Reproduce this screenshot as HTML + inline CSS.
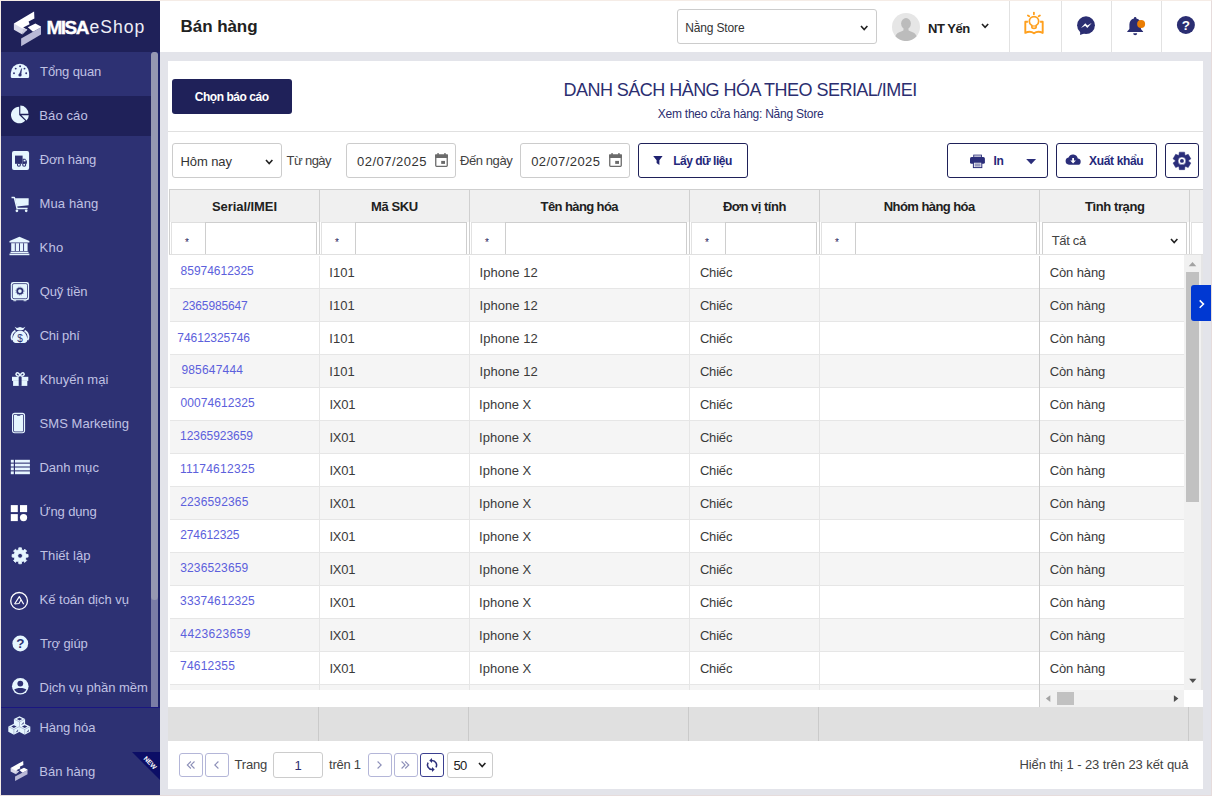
<!DOCTYPE html>
<html lang="vi"><head><meta charset="utf-8"><title>MISA eShop - Bán hàng</title>
<style>
*{box-sizing:border-box;margin:0;padding:0}
html,body{width:1212px;height:796px;overflow:hidden}
body{position:relative;background:#e3e4ea;font-family:"Liberation Sans",sans-serif;font-size:13px;color:#333}
svg{display:block;position:absolute}
.t{position:absolute;white-space:nowrap;line-height:16px;display:block}
a{text-decoration:none}
#frame{position:absolute;left:0;top:0;width:1212px;height:796px;border:1px solid #e6dcdc;border-left-color:#f5ece6;border-top-color:#f5ece6;pointer-events:none}
#side{position:absolute;left:0;top:0;width:160px;height:796px;background:#2d3173;overflow:hidden}
#logo{position:absolute;left:0;top:0;width:160px;height:52px;background:#1f2159}
.misa{font-weight:bold;font-size:19px;color:#fff;line-height:24px;-webkit-text-stroke:0.35px #fff}
.eshop{font-size:17.6px;color:#eeeef6;line-height:24px}
#menu{position:absolute;left:0;top:0;width:160px;height:707px;overflow:hidden}
.mi{position:absolute;left:0;width:160px;height:40px}
.mi.act{background:#1f2159;width:151px}
.mi .ic{position:absolute;left:0;top:0;width:40px;height:40px}
.tx{font-size:13px;color:#c0c2e3}
#sbtrack{position:absolute;left:151px;top:52px;width:7px;height:655px;background:#7b7da6;border-radius:4px 4px 0 0}
#sbthumb{position:absolute;left:151px;top:52px;width:7px;height:548px;background:#9698b2;border-radius:4px}
#side:after{content:"";position:absolute;left:158px;top:52px;width:2px;height:655px;background:#1f2468}
#sidebot{position:absolute;left:0;top:707px;width:160px;height:89px;border-top:1px solid #1a1680;background:#2d3173}
#newtri{position:absolute;right:0;top:44px;width:0;height:0;border-top:28px solid #0c0e66;border-left:28px solid transparent}
#newtx{position:absolute;left:141px;top:50.6px;width:18px;text-align:center;font-size:6.6px;font-weight:bold;color:#fff;transform:rotate(45deg);transform-origin:center;line-height:8px}
#top{position:absolute;left:160px;top:0;width:1052px;height:52px;background:#fff}
.ttl{font-size:17px;font-weight:bold;color:#212121;line-height:24px}
#store{position:absolute;left:677px;top:9px;width:200px;height:35px;border:1px solid #ccc;border-radius:3px;background:#fff}
.st{font-size:12px;color:#333}
#avatar{position:absolute;left:892px;top:13px;width:28px;height:28px}
.uname{font-size:13px;font-weight:bold;color:#212121}
#uchev{position:absolute;left:980px;top:22px;width:12px;height:8px}
.vsep{position:absolute;top:0;width:1px;height:52px;background:#e2e2e2}
#card{position:absolute;left:168px;top:61px;width:1035px;height:728px;background:#fff}
#btnrep{position:absolute;left:172px;top:79px;width:120px;height:35px;background:#1f2159;border-radius:3px}
.bt{color:#fff;font-weight:bold;font-size:12px;width:120px;text-align:center;line-height:35px}
.h1{font-size:18px;line-height:24px;color:#2b2e70}
.h2{font-size:12px;color:#2b2e70}
#hr{position:absolute;left:168px;top:131px;width:1035px;height:1px;background:#e0e0e0}
.inp{position:absolute;top:143px;height:35px;border:1px solid #ccc;border-radius:3px;background:#fff}
.v{font-size:13px;color:#333}
.lbl{font-size:13px;color:#424242}
.btn{position:absolute;top:143px;height:35px;border:1px solid #1f2159;border-radius:3px;background:#fff}
.b{font-size:12px;font-weight:bold;color:#25287a}
#thead{position:absolute;left:169px;top:189px;width:1034px;height:66px;background:#fff;border-top:1px solid #cfcfcf;border-left:1px solid #cfcfcf;border-bottom:1px solid #e0e0e0;overflow:hidden}
#thead:before{content:"";position:absolute;left:0;top:0;width:1033px;height:32px;background:#f0f0f0}
.th{font-weight:bold;font-size:13px;color:#212121}
.thsep{position:absolute;top:0;width:1px;height:65px;background:#d0d0d0}
.fop{position:absolute;top:32px;width:34px;height:33px;background:#fff;border-top:1px solid #dedede;border-left:1px solid #e2e2e2;font-size:10px;text-align:center;line-height:40px;color:#1f2159;padding-right:3px}
.fin{position:absolute;top:32px;height:33px;background:#fff;border:1px solid #cecece;border-bottom:none}
.fsel{position:absolute;top:32px;height:33px;background:#fff;border:1px solid #d0d0d0;border-bottom:none}
.fs{font-size:13px;color:#424242}
#tbody{position:absolute;left:170px;top:255px;width:1014px;height:435px;overflow:hidden}
.tr{position:absolute;left:0;width:1014px;height:33px;background:#fff}
.tr{border-top:1px solid #e6e6e6}
.tr:first-child{border-top-color:#fff}
.tr.alt{background:#f5f5f5}
.td{font-size:13px;color:#3a3a3a}
.sn{font-size:12px;color:#5c60dc}
.colsep{position:absolute;top:1px;width:1px;height:452px;background:#e6e6e6}
.colsep.dk{background:#cbcbcb}
#vsb{position:absolute;left:1184px;top:255px;width:19px;border-right:2px solid #e5e5e6;height:435px;background:#f1f1f1}
#vsb .thumb{position:absolute;left:2px;top:17px;width:13px;height:230px;background:#c1c1c1}
#hsb{position:absolute;left:1039px;top:690px;width:145px;height:17px;background:#f1f1f1;border-left:1px solid #cbcbcb}
#hsb .thumb{position:absolute;left:17px;top:2px;width:17px;height:13px;background:#c1c1c1}
#sum{position:absolute;left:168px;top:707px;width:1035px;height:34px;background:#e0e0e0}
.ssep{position:absolute;top:0;width:1px;height:34px;background:#cacaca}
.pb{position:absolute;top:753px;width:24px;height:24px;border:1px solid #b4b6d8;border-radius:3px;background:#fff}
.pb.dark{border-color:#3b3f90}
.ptx{font-size:13px;color:#424242}
.pin{position:absolute;left:273px;top:752px;width:50px;height:26px;border:1px solid #ccc;border-radius:3px}
.pv{font-size:13px;color:#212121}
.pin .pv{width:48px;text-align:center;line-height:24px;color:#2b2e70}
.psel{position:absolute;left:447px;top:752px;width:46px;height:26px;border:1px solid #ccc;border-radius:3px}
#tab{position:absolute;left:1191px;top:285px;width:20px;height:36px;background:#0038d2;border-radius:3px 0 0 3px}
</style></head><body>
<div id="side">
<div id="logo"><svg width="160" height="52" viewBox="0 0 160 52" style="left:0;top:0"><polygon points="13.9,23.6 34.1,11.4 34.4,18.4 28.6,21.6 29.6,24.2 23.2,27.6 27.4,29.8 22.4,32.8" fill="#fff"/><polygon points="13.9,23.6 22.4,28.6 22.4,34.6 13.9,29.8" fill="#d9d9ea"/><polygon points="22.4,28.2 27.4,29.8 22.4,34.6" fill="#c9c9e0"/><polygon points="27.8,27.2 35.4,23.4 41,26.4 41,27.4 33,31.8" fill="#fff"/><polygon points="21.1,38.6 41,27.2 41,34.4 21.1,46.2" fill="#b9b9d6"/></svg><span id="misa" class="t misa" style="left:46.5px;top:15.8px;letter-spacing:-1.5px;">MISA</span><span id="eshop" class="t eshop" style="left:89.4px;top:15.4px;letter-spacing:1.0px;">eShop</span></div>
<div id="menu">
<div class="mi" style="top:52px"><span class="ic"><svg width="40" height="40" viewBox="0 0 40 40" style="left:0;top:0"><path d="M10.8,21 A9.15,9.15 0 0 1 29.1,21 L29.1,24.8 Q29.1,26.1 27.8,26.1 L12.1,26.1 Q10.8,26.1 10.8,24.8 Z" fill="#e6f6ff"/><circle cx="14" cy="21.2" r="0.95" fill="#2d3173"/><circle cx="15.7" cy="16.6" r="0.95" fill="#2d3173"/><circle cx="20.1" cy="14.2" r="0.95" fill="#2d3173"/><circle cx="24.5" cy="16.6" r="0.95" fill="#2d3173"/><circle cx="26.2" cy="21.2" r="0.95" fill="#2d3173"/><circle cx="20" cy="23" r="1.6" fill="#2d3173"/><path d="M19.3,22.8 L21.6,16.6 L20.9,23.2 Z" fill="#2d3173" stroke="#2d3173" stroke-width="0.6"/></svg></span><span id="m0" class="t tx" style="left:40.08px;top:12px;letter-spacing:-0.125px;">Tổng quan</span></div>
<div class="mi act" style="top:96px"><span class="ic"><svg width="40" height="40" viewBox="0 0 40 40" style="left:0;top:0"><path d="M19.2,18.9 L19.2,10.7 A8.3,8.3 0 1 0 25.2,24.8 Z" fill="#e6f6ff"/><path d="M20.3,17.7 L20.3,9.6 A8.1,8.1 0 0 1 28.4,17.7 Z" fill="#e6f6ff"/><path d="M21.4,19.2 L28.8,19.2 A8.4,8.4 0 0 1 26.6,24.6 Z" fill="#e6f6ff"/></svg></span><span id="m1" class="t tx" style="left:39.25px;top:12px;letter-spacing:0.125px;">Báo cáo</span></div>
<div class="mi" style="top:140px"><span class="ic"><svg width="40" height="40" viewBox="0 0 40 40" style="left:0;top:0"><rect x="12" y="10.9" width="17.1" height="19.1" rx="2" fill="#e6f6ff"/><rect x="15" y="15.6" width="7.6" height="8.2" fill="#2d3173"/><path d="M22.6,18.8 L25.2,18.8 L26.9,21 L26.9,23.8 L22.6,23.8 Z" fill="#2d3173"/><rect x="23.6" y="19.8" width="1.9" height="1.6" fill="#e6f6ff"/><circle cx="18.9" cy="24.8" r="1.5" fill="#e6f6ff" stroke="#2d3173" stroke-width="1.1"/><circle cx="24.2" cy="24.8" r="1.5" fill="#e6f6ff" stroke="#2d3173" stroke-width="1.1"/></svg></span><span id="m2" class="t tx" style="left:39.8px;top:12px;letter-spacing:-0.178px;">Đơn hàng</span></div>
<div class="mi" style="top:184px"><span class="ic"><svg width="40" height="40" viewBox="0 0 40 40" style="left:0;top:0"><path d="M11.5,13.4 L14.3,13.4 L17.1,24.6 L27.6,24.6" fill="none" stroke="#e6f6ff" stroke-width="1.5" stroke-linejoin="round"/><polygon points="15,14.2 28.7,14.2 28.6,21.2 16.9,22.4" fill="#e6f6ff"/><circle cx="16.9" cy="26.8" r="1.35" fill="#e6f6ff"/><circle cx="26.2" cy="26.8" r="1.35" fill="#e6f6ff"/></svg></span><span id="m3" class="t tx" style="left:39.5px;top:12px;letter-spacing:0.143px;">Mua hàng</span></div>
<div class="mi" style="top:228px"><span class="ic"><svg width="40" height="40" viewBox="0 0 40 40" style="left:0;top:0"><polygon points="19.4,8.7 29.4,13 29.4,14.4 9.5,14.4 9.5,13" fill="#e6f6ff"/><rect x="11.2" y="15.2" width="16.4" height="8" fill="#e6f6ff"/><rect x="14.850000000000001" y="15.2" width="0.9" height="8" fill="#2d3173"/><rect x="19.05" y="15.2" width="0.9" height="8" fill="#2d3173"/><rect x="23.150000000000002" y="15.2" width="0.9" height="8" fill="#2d3173"/><rect x="10.5" y="23.8" width="18" height="1.3" fill="#e6f6ff"/><rect x="9.5" y="25.6" width="19.9" height="1.6" fill="#e6f6ff"/></svg></span><span id="m4" class="t tx" style="left:39.6px;top:12px;letter-spacing:0.25px;">Kho</span></div>
<div class="mi" style="top:272px"><span class="ic"><svg width="40" height="40" viewBox="0 0 40 40" style="left:0;top:0"><rect x="10.8" y="10" width="18.3" height="18.3" rx="2.4" fill="#e6f6ff"/><rect x="12.4" y="11.6" width="15.1" height="15.1" rx="1.6" fill="none" stroke="#2d3173" stroke-width="0.8"/><circle cx="19.9" cy="19.1" r="2.7" fill="#e6f6ff" stroke="#2d3173" stroke-width="1.7"/><circle cx="19.9" cy="19.1" r="4.1" fill="none" stroke="#2d3173" stroke-width="0.9" stroke-dasharray="1 1.15" opacity=".55"/><rect x="13.4" y="28.3" width="2.8" height="0.9" fill="#e6f6ff"/><rect x="23.6" y="28.3" width="2.8" height="0.9" fill="#e6f6ff"/></svg></span><span id="m5" class="t tx" style="left:39.65px;top:12px;letter-spacing:-0.071px;">Quỹ tiền</span></div>
<div class="mi" style="top:316px"><span class="ic"><svg width="40" height="40" viewBox="0 0 40 40" style="left:0;top:0"><path d="M20,14.6 C25.6,14.8 27.6,21 27.2,24.4 C27,26.6 25,27.1 20,27.1 C15,27.1 13,26.6 12.8,24.4 C12.4,21 14.4,14.8 20,14.6 Z" fill="#e6f6ff"/><path d="M14.6,10.8 L17,11.9 L20,10.9 L23,11.9 L25.4,10.8 L23.2,13.9 L16.8,13.9 Z" fill="#e6f6ff"/><path d="M15.4,14.6 C12.6,16.2 11.2,19.4 11.7,22.4 L12.6,24" fill="none" stroke="#e6f6ff" stroke-width="1.8"/><path d="M24.6,14.6 C27.4,16.2 28.8,19.4 28.3,22.4 L27.4,24" fill="none" stroke="#e6f6ff" stroke-width="1.8"/><text x="20" y="25.6" font-size="10" text-anchor="middle" fill="#2d3173" font-family="Liberation Sans, sans-serif">$</text></svg></span><span id="m6" class="t tx" style="left:39.65px;top:12px;letter-spacing:-0.167px;">Chi phí</span></div>
<div class="mi" style="top:360px"><span class="ic"><svg width="40" height="40" viewBox="0 0 40 40" style="left:0;top:0"><ellipse cx="17.8" cy="14.5" rx="1.9" ry="1.5" transform="rotate(35 17.8 14.5)" fill="none" stroke="#e6f6ff" stroke-width="1.5"/><ellipse cx="22.4" cy="14.5" rx="1.9" ry="1.5" transform="rotate(-35 22.4 14.5)" fill="none" stroke="#e6f6ff" stroke-width="1.5"/><rect x="12" y="16.8" width="16.3" height="4.1" fill="#e6f6ff"/><rect x="13.1" y="20.9" width="14.2" height="5" fill="#e6f6ff"/><rect x="18.7" y="16.8" width="2.9" height="9.1" fill="#2d3173"/></svg></span><span id="m7" class="t tx" style="left:39.67px;top:12px;letter-spacing:0.001px;">Khuyến mại</span></div>
<div class="mi" style="top:404px"><span class="ic"><svg width="40" height="40" viewBox="0 0 40 40" style="left:0;top:0"><rect x="12.55" y="9.35" width="12" height="19.4" rx="2.2" fill="#2d3173" stroke="#e6f6ff" stroke-width="1.1"/><rect x="13.9" y="10.7" width="9.3" height="16.7" rx="1" fill="#e6f6ff"/><path d="M16.6,10.7 L20.6,10.7 Q20.4,11.7 19.4,11.7 L17.8,11.7 Q16.8,11.7 16.6,10.7 Z" fill="#2d3173"/></svg></span><span id="m8" class="t tx" style="left:39.62px;top:12px;letter-spacing:0.042px;">SMS Marketing</span></div>
<div class="mi" style="top:448px"><span class="ic"><svg width="40" height="40" viewBox="0 0 40 40" style="left:0;top:0"><rect x="10.8" y="11.8" width="3" height="2.8" fill="#e6f6ff"/><rect x="15" y="11.8" width="14.9" height="2.8" fill="#e6f6ff"/><rect x="10.8" y="15.67" width="3" height="2.8" fill="#e6f6ff"/><rect x="15" y="15.67" width="14.9" height="2.8" fill="#e6f6ff"/><rect x="10.8" y="19.53" width="3" height="2.8" fill="#e6f6ff"/><rect x="15" y="19.53" width="14.9" height="2.8" fill="#e6f6ff"/><rect x="10.8" y="23.4" width="3" height="2.8" fill="#e6f6ff"/><rect x="15" y="23.4" width="14.9" height="2.8" fill="#e6f6ff"/></svg></span><span id="m9" class="t tx" style="left:39.4px;top:12px;letter-spacing:0.035px;">Danh mục</span></div>
<div class="mi" style="top:492px"><span class="ic"><svg width="40" height="40" viewBox="0 0 40 40" style="left:0;top:0"><rect x="10.8" y="13.1" width="7" height="7" fill="#fff"/><rect x="20" y="13.1" width="7.1" height="7" fill="#fff"/><rect x="10.8" y="22.1" width="7" height="7" fill="#fff"/><circle cx="23.55" cy="25.6" r="3.6" fill="#fff"/></svg></span><span id="m10" class="t tx" style="left:39.58px;top:12px;letter-spacing:-0.143px;">Ứng dụng</span></div>
<div class="mi" style="top:536px"><span class="ic"><svg width="40" height="40" viewBox="0 0 40 40" style="left:0;top:0"><path d="M18.66,13.77 L18.78,11.81 L21.42,11.81 L21.54,13.77 L23.34,14.52 L24.82,13.22 L26.68,15.08 L25.38,16.56 L26.13,18.36 L28.09,18.48 L28.09,21.12 L26.13,21.24 L25.38,23.04 L26.68,24.52 L24.82,26.38 L23.34,25.08 L21.54,25.83 L21.42,27.79 L18.78,27.79 L18.66,25.83 L16.86,25.08 L15.38,26.38 L13.52,24.52 L14.82,23.04 L14.07,21.24 L12.11,21.12 L12.11,18.48 L14.07,18.36 L14.82,16.56 L13.52,15.08 L15.38,13.22 L16.86,14.52 Z M17.700000000000003,19.8 a2.4,2.4 0 1 0 4.8,0 a2.4,2.4 0 1 0 -4.8,0 Z" fill="#e6f6ff" fill-rule="evenodd" stroke="#e6f6ff" stroke-width="0.8" stroke-linejoin="round"/></svg></span><span id="m11" class="t tx" style="left:40.08px;top:12px;letter-spacing:0.064px;">Thiết lập</span></div>
<div class="mi" style="top:580px"><span class="ic"><svg width="40" height="40" viewBox="0 0 40 40" style="left:0;top:0"><circle cx="19.1" cy="20.9" r="8.4" fill="none" stroke="#fff" stroke-width="1.3"/><path d="M14.6,24 L19.3,16.6 L23.7,24.2" fill="none" stroke="#fff" stroke-width="1.2" stroke-linejoin="round"/><path d="M14.6,24 L19,23.5 L20.9,20" fill="none" stroke="#fff" stroke-width="1.1" stroke-linejoin="round"/></svg></span><span id="m12" class="t tx" style="left:39.6px;top:12px;letter-spacing:-0.018px;">Kế toán dịch vụ</span></div>
<div class="mi" style="top:624px"><span class="ic"><svg width="40" height="40" viewBox="0 0 40 40" style="left:0;top:0"><circle cx="20.3" cy="19.5" r="7.9" fill="#e6f6ff"/><text x="20.3" y="24.2" font-size="13.5" font-weight="bold" text-anchor="middle" fill="#2d3173" font-family="Liberation Sans, sans-serif">?</text></svg></span><span id="m13" class="t tx" style="left:40.0px;top:12px;letter-spacing:-0.107px;">Trợ giúp</span></div>
<div class="mi" style="top:668px"><span class="ic"><svg width="40" height="40" viewBox="0 0 40 40" style="left:0;top:0"><circle cx="20.3" cy="18.3" r="8.3" fill="#e6f6ff"/><circle cx="20.3" cy="15.6" r="2.9" fill="#2d3173"/><path d="M14.2,21.6 C16,19.4 24.6,19.4 26.4,21.6 A6.9,6.9 0 0 1 14.2,21.6 Z" fill="#2d3173"/></svg></span><span id="m14" class="t tx" style="left:39.5px;top:12px;letter-spacing:0.001px;">Dịch vụ phần mềm</span></div>
<div id="sbtrack"></div><div id="sbthumb"></div>
</div>
<div id="sidebot">
<div class="mi" style="top:0px"><span class="ic"><svg width="40" height="40" viewBox="0 0 40 40" style="left:0;top:0"><polygon points="19.5,8.2 25.1,11.049999999999999 25.1,16.349999999999998 19.5,19.2 13.9,16.349999999999998 13.9,11.049999999999999" fill="#e6f6ff"/><path d="M13.9,11.049999999999999 L19.5,13.899999999999999 L25.1,11.049999999999999 M19.5,13.899999999999999 L19.5,19.2" stroke="#2d3173" stroke-width="0.6" fill="none" opacity=".45"/><polygon points="19.5,9.7 22.2,11.049999999999999 19.5,12.399999999999999 16.8,11.049999999999999" fill="#2d3173"/><polygon points="21.1,17.0 23.7,13.749999999999998 23.7,15.949999999999998" fill="#2d3173" opacity=".8"/><polygon points="13.9,15.7 19.5,18.55 19.5,23.85 13.9,26.7 8.3,23.85 8.3,18.55" fill="#e6f6ff"/><path d="M8.3,18.55 L13.9,21.4 L19.5,18.55 M13.9,21.4 L13.9,26.7" stroke="#2d3173" stroke-width="0.6" fill="none" opacity=".45"/><polygon points="13.9,17.2 16.6,18.55 13.9,19.9 11.2,18.55" fill="#2d3173"/><polygon points="15.5,24.5 18.1,21.25 18.1,23.450000000000003" fill="#2d3173" opacity=".8"/><polygon points="24.7,15.7 30.299999999999997,18.55 30.299999999999997,23.85 24.7,26.7 19.1,23.85 19.1,18.55" fill="#e6f6ff"/><path d="M19.1,18.55 L24.7,21.4 L30.299999999999997,18.55 M24.7,21.4 L24.7,26.7" stroke="#2d3173" stroke-width="0.6" fill="none" opacity=".45"/><polygon points="24.7,17.2 27.4,18.55 24.7,19.9 22.0,18.55" fill="#2d3173"/><polygon points="26.3,24.5 28.9,21.25 28.9,23.450000000000003" fill="#2d3173" opacity=".8"/></svg></span><span id="m15" class="t tx" style="left:39.48px;top:12px;letter-spacing:-0.07px;">Hàng hóa</span></div>
<div class="mi" style="top:44px"><span class="ic"><svg width="40" height="40" viewBox="0 0 40 40" style="left:0;top:0"><g transform="translate(10.6,8.9) scale(0.6236,0.578) translate(-13.9,-11.4)"><polygon points="13.9,23.6 34.1,11.4 34.4,18.4 28.6,21.6 29.6,24.2 23.2,27.6 27.4,29.8 22.4,32.8" fill="#fff"/><polygon points="13.9,23.6 22.4,28.6 22.4,34.6 13.9,29.8" fill="#d9d9ea"/><polygon points="22.4,28.2 27.4,29.8 22.4,34.6" fill="#c9c9e0"/><polygon points="27.8,27.2 35.4,23.4 41,26.4 41,27.4 33,31.8" fill="#fff"/><polygon points="21.1,38.6 41,27.2 41,34.4 21.1,46.2" fill="#b9b9d6"/></g></svg></span><span id="m16" class="t tx" style="left:39.3px;top:12px;letter-spacing:0.035px;">Bán hàng</span></div>
<div id="newtri"></div><div id="newtx">NEW</div>
</div>
</div>
<div id="top"></div>
<div id="ttl" class="t ttl" style="left:180.62px;top:15px;letter-spacing:-0.072px;">Bán hàng</div>
<div id="store"><span id="store_t" class="t st" style="left:7.35px;top:10px;letter-spacing:-0.166px;">Nằng Store</span><svg width="10.4" height="7.5" viewBox="-2 -2 10.4 7.5" style="left:181.00px;top:14.25px"><path d="M0,0 L3.2,3.5 L6.4,0" fill="none" stroke="#212121" stroke-width="1.6"/></svg></div>
<div id="avatar"><svg width="28" height="28" viewBox="0 0 28 28" style="left:0;top:0"><circle cx="14" cy="14" r="14" fill="#e6e6e6"/><ellipse cx="14" cy="10.6" rx="4.9" ry="5.6" fill="#bcbcbc"/><path d="M3.4,23.2 C4.6,19.6 8.6,19 11.4,17.6 L11.6,15 L16.4,15 L16.6,17.6 C19.4,19 23.4,19.6 24.6,23.2 A14,14 0 0 1 3.4,23.2 Z" fill="#bcbcbc"/></svg></div><div id="uname" class="t uname" style="left:927.97px;top:21px;letter-spacing:-0.48px;">NT Yến</div><div id="uchev"><svg width="10.2" height="7.3" viewBox="-2 -2 10.2 7.3" style="left:0.40px;top:0.25px"><path d="M0,0 L3.1,3.3 L6.2,0" fill="none" stroke="#212121" stroke-width="1.6"/></svg></div>
<div class="vsep" style="left:1009px"></div><div class="vsep" style="left:1061px"></div><div class="vsep" style="left:1111px"></div><div class="vsep" style="left:1161px"></div>
<svg width="1212" height="52" viewBox="0 0 1212 52" style="left:0;top:0;pointer-events:none"><g fill="none" stroke="#ffa01e" stroke-width="1.9" stroke-linejoin="round"><path d="M1027.9,21.7 L1025.3,21.7 L1025.3,32.9 C1028.5,31.2 1031.5,31.4 1034,33.2 C1036.5,31.4 1039.5,31.2 1042.7,32.9 L1042.7,21.7 L1040.1,21.7"/><path d="M1031.9,25.6 C1029.6,24.2 1029.3,22.6 1029.3,21.4 A4.7,4.7 0 0 1 1038.7,21.4 C1038.7,22.6 1038.4,24.2 1036.1,25.6 L1036.1,27.3 Q1036.1,28.4 1034,28.4 Q1031.9,28.4 1031.9,27.3 Z" stroke-width="1.7"/><path d="M1032.2,26 L1035.8,26" stroke-width="1.2"/><path d="M1033.9,12.6 L1033.9,14.2 M1027.9,15.5 L1029.2,16.3 M1039.9,15.5 L1038.6,16.3" stroke-linecap="round" stroke-width="1.8"/></g><circle cx="1086" cy="25.2" r="8.9" fill="#2b2e72"/><path d="M1080.2,31 L1080.1,34.9 L1084.2,33.4 Z" fill="#2b2e72"/><path d="M1081,28 L1085.3,23.3 L1087.4,25.6 L1091.7,23.1 L1087.3,27.9 L1085.2,25.7 Z" fill="#fff"/><path d="M1135.2,17 a1.2,1.2 0 0 1 1.2,1.2 L1136.4,18.6 C1139.4,19.3 1140.9,21.8 1140.9,24.6 L1140.9,29 L1143.1,31.4 L1143.1,32 L1127.2,32 L1127.2,31.4 L1129.4,29 L1129.4,24.6 C1129.4,21.8 1130.9,19.3 1133.9,18.6 L1133.9,18.2 a1.2,1.2 0 0 1 1.3,-1.2 Z" fill="#2b2e72"/><path d="M1133.2,33.2 L1137.2,33.2 A2,2 0 0 1 1133.2,33.2 Z" fill="#2b2e72"/><circle cx="1141.1" cy="24" r="4" fill="#ea7d03"/><circle cx="1185.9" cy="25" r="9" fill="#2b2e72"/><text x="1185.9" y="29.8" font-size="13.5" font-weight="bold" text-anchor="middle" fill="#fff" font-family="Liberation Sans, sans-serif">?</text></svg>
<div id="card"></div>
<div id="btnrep"><span id="btnrep_t" class="t bt" style="left:-0.28px;top:1px;letter-spacing:-0.455px;">Chọn báo cáo</span></div>
<div id="h1" class="t h1" style="left:563.48px;top:78px;letter-spacing:-0.53px;">DANH SÁCH HÀNG HÓA THEO SERIAL/IMEI</div>
<div id="h2" class="t h2" style="left:657.85px;top:106px;letter-spacing:-0.25px;">Xem theo cửa hàng: Nằng Store</div>
<div id="hr"></div>
<div class="inp" style="left:172px;width:110px"><span id="sel1" class="t v" style="left:7.62px;top:10px;letter-spacing:-0.125px;">Hôm nay</span><svg width="10.4" height="7.5" viewBox="-2 -2 10.4 7.5" style="left:91.30px;top:14.25px"><path d="M0,0 L3.2,3.5 L6.4,0" fill="none" stroke="#212121" stroke-width="1.6"/></svg></div>
<div id="lb1" class="t lbl" style="left:286.55px;top:153px;letter-spacing:-0.582px;">Từ ngày</div>
<div class="inp" style="left:346px;width:110px"><span id="d1" class="t v" style="left:9.95px;top:10px;letter-spacing:0.5px;">02/07/2025</span></div>
<div id="lb2" class="t lbl" style="left:460.05px;top:153px;letter-spacing:-0.429px;">Đến ngày</div>
<div class="inp" style="left:520px;width:110px"><span id="d2" class="t v" style="left:10.15px;top:10px;letter-spacing:0.417px;">02/07/2025</span></div>
<div class="btn" style="left:638px;width:110px"><span id="b1" class="t b" style="left:34.2px;top:9px;letter-spacing:-0.5px;">Lấy dữ liệu</span></div>
<div class="btn" style="left:947px;width:101px"><span id="b2" class="t b" style="left:45.45px;top:9px;letter-spacing:-0.3px;">In</span></div>
<div class="btn" style="left:1056px;width:101px"><span id="b3" class="t b" style="left:32.03px;top:9px;letter-spacing:-0.342px;">Xuất khẩu</span></div>
<div class="btn" style="left:1165px;width:34px"></div>
<div id="thead">
<span id="th0" class="t th" style="left:42.0px;top:9px;letter-spacing:-0.075px;">Serial/IMEI</span><div class="thsep" style="left:149px"></div>
<div class="fop" style="left:1px">*</div><div class="fin" style="left:35px;width:112px"></div>
<span id="th1" class="t th" style="left:201.05px;top:9px;letter-spacing:-0.4px;">Mã SKU</span><div class="thsep" style="left:299px"></div>
<div class="fop" style="left:151px">*</div><div class="fin" style="left:185px;width:112px"></div>
<span id="th2" class="t th" style="left:370.55px;top:9px;letter-spacing:-0.592px;">Tên hàng hóa</span><div class="thsep" style="left:519px"></div>
<div class="fop" style="left:301px">*</div><div class="fin" style="left:335px;width:182px"></div>
<span id="th3" class="t th" style="left:552.88px;top:9px;letter-spacing:-0.5px;">Đơn vị tính</span><div class="thsep" style="left:649px"></div>
<div class="fop" style="left:521px">*</div><div class="fin" style="left:555px;width:92px"></div>
<span id="th4" class="t th" style="left:713.75px;top:9px;letter-spacing:-0.562px;">Nhóm hàng hóa</span><div class="thsep" style="left:869px"></div>
<div class="fop" style="left:651px">*</div><div class="fin" style="left:685px;width:182px"></div>
<span id="th5" class="t th" style="left:915.1px;top:9px;letter-spacing:-0.416px;">Tình trạng</span><div class="thsep" style="left:1019px"></div>
<div class="fsel" style="left:872px;width:145px"><span id="fsel" class="t fs" style="left:8.65px;top:10px;letter-spacing:-0.3px;">Tất cả</span><svg width="10.4" height="7.5" viewBox="-2 -2 10.4 7.5" style="left:126.20px;top:14.45px"><path d="M0,0 L3.2,3.5 L6.4,0" fill="none" stroke="#212121" stroke-width="1.6"/></svg></div>
<div class="fop" style="left:1021px;width:14px"></div>
</div>
<div id="tbody">
<div class="tr" style="top:0px"><a id="sn0" class="t sn" style="left:10.62px;top:7px;letter-spacing:-0.025px;">85974612325</a><span id="sku0" class="t td" style="left:159.35px;top:9px;letter-spacing:0.001px;">I101</span><span id="nm0" class="t td" style="left:309.6px;top:9px;letter-spacing:0.033px;">Iphone 12</span><span id="dv0" class="t td" style="left:529.9px;top:9px;letter-spacing:-0.187px;">Chiếc</span><span id="tt0" class="t td" style="left:879.72px;top:9px;letter-spacing:-0.107px;">Còn hàng</span></div>
<div class="tr alt" style="top:33px"><a id="sn1" class="t sn" style="left:12.28px;top:9px;letter-spacing:-0.139px;">2365985647</a><span id="sku1" class="t td" style="left:159.35px;top:9px;letter-spacing:0.001px;">I101</span><span id="nm1" class="t td" style="left:309.6px;top:9px;letter-spacing:0.033px;">Iphone 12</span><span id="dv1" class="t td" style="left:529.9px;top:9px;letter-spacing:-0.187px;">Chiếc</span><span id="tt1" class="t td" style="left:879.72px;top:9px;letter-spacing:-0.107px;">Còn hàng</span></div>
<div class="tr" style="top:66px"><a id="sn2" class="t sn" style="left:7.35px;top:8px;letter-spacing:-0.075px;">74612325746</a><span id="sku2" class="t td" style="left:159.35px;top:9px;letter-spacing:0.001px;">I101</span><span id="nm2" class="t td" style="left:309.6px;top:9px;letter-spacing:0.033px;">Iphone 12</span><span id="dv2" class="t td" style="left:529.9px;top:9px;letter-spacing:-0.187px;">Chiếc</span><span id="tt2" class="t td" style="left:879.72px;top:9px;letter-spacing:-0.107px;">Còn hàng</span></div>
<div class="tr alt" style="top:99px"><a id="sn3" class="t sn" style="left:11.38px;top:7px;letter-spacing:0.186px;">985647444</a><span id="sku3" class="t td" style="left:159.35px;top:9px;letter-spacing:0.001px;">I101</span><span id="nm3" class="t td" style="left:309.6px;top:9px;letter-spacing:0.033px;">Iphone 12</span><span id="dv3" class="t td" style="left:529.9px;top:9px;letter-spacing:-0.187px;">Chiếc</span><span id="tt3" class="t td" style="left:879.72px;top:9px;letter-spacing:-0.107px;">Còn hàng</span></div>
<div class="tr" style="top:132px"><a id="sn4" class="t sn" style="left:10.53px;top:7px;letter-spacing:0.075px;">00074612325</a><span id="sku4" class="t td" style="left:159.38px;top:9px;letter-spacing:-0.25px;">IX01</span><span id="nm4" class="t td" style="left:309.1px;top:9px;">Iphone X</span><span id="dv4" class="t td" style="left:529.9px;top:9px;letter-spacing:-0.187px;">Chiếc</span><span id="tt4" class="t td" style="left:879.72px;top:9px;letter-spacing:-0.107px;">Còn hàng</span></div>
<div class="tr alt" style="top:165px"><a id="sn5" class="t sn" style="left:10.1px;top:7px;letter-spacing:-0.05px;">12365923659</a><span id="sku5" class="t td" style="left:159.38px;top:9px;letter-spacing:-0.25px;">IX01</span><span id="nm5" class="t td" style="left:309.1px;top:9px;">Iphone X</span><span id="dv5" class="t td" style="left:529.9px;top:9px;letter-spacing:-0.187px;">Chiếc</span><span id="tt5" class="t td" style="left:879.72px;top:9px;letter-spacing:-0.107px;">Còn hàng</span></div>
<div class="tr" style="top:198px"><a id="sn6" class="t sn" style="left:10.03px;top:7px;letter-spacing:0.3px;">11174612325</a><span id="sku6" class="t td" style="left:159.38px;top:9px;letter-spacing:-0.25px;">IX01</span><span id="nm6" class="t td" style="left:309.1px;top:9px;">Iphone X</span><span id="dv6" class="t td" style="left:529.9px;top:9px;letter-spacing:-0.187px;">Chiếc</span><span id="tt6" class="t td" style="left:879.72px;top:9px;letter-spacing:-0.107px;">Còn hàng</span></div>
<div class="tr alt" style="top:231px"><a id="sn7" class="t sn" style="left:10.15px;top:7px;letter-spacing:0.166px;">2236592365</a><span id="sku7" class="t td" style="left:159.38px;top:9px;letter-spacing:-0.25px;">IX01</span><span id="nm7" class="t td" style="left:309.1px;top:9px;">Iphone X</span><span id="dv7" class="t td" style="left:529.9px;top:9px;letter-spacing:-0.187px;">Chiếc</span><span id="tt7" class="t td" style="left:879.72px;top:9px;letter-spacing:-0.107px;">Còn hàng</span></div>
<div class="tr" style="top:264px"><a id="sn8" class="t sn" style="left:10.17px;top:7px;letter-spacing:-0.092px;">274612325</a><span id="sku8" class="t td" style="left:159.38px;top:9px;letter-spacing:-0.25px;">IX01</span><span id="nm8" class="t td" style="left:309.1px;top:9px;">Iphone X</span><span id="dv8" class="t td" style="left:529.9px;top:9px;letter-spacing:-0.187px;">Chiếc</span><span id="tt8" class="t td" style="left:879.72px;top:9px;letter-spacing:-0.107px;">Còn hàng</span></div>
<div class="tr alt" style="top:297px"><a id="sn9" class="t sn" style="left:10.2px;top:7px;letter-spacing:0.139px;">3236523659</a><span id="sku9" class="t td" style="left:159.38px;top:9px;letter-spacing:-0.25px;">IX01</span><span id="nm9" class="t td" style="left:309.1px;top:9px;">Iphone X</span><span id="dv9" class="t td" style="left:529.9px;top:9px;letter-spacing:-0.187px;">Chiếc</span><span id="tt9" class="t td" style="left:879.72px;top:9px;letter-spacing:-0.107px;">Còn hàng</span></div>
<div class="tr" style="top:330px"><a id="sn10" class="t sn" style="left:10.1px;top:7px;letter-spacing:0.125px;">33374612325</a><span id="sku10" class="t td" style="left:159.38px;top:9px;letter-spacing:-0.25px;">IX01</span><span id="nm10" class="t td" style="left:309.1px;top:9px;">Iphone X</span><span id="dv10" class="t td" style="left:529.9px;top:9px;letter-spacing:-0.187px;">Chiếc</span><span id="tt10" class="t td" style="left:879.72px;top:9px;letter-spacing:-0.107px;">Còn hàng</span></div>
<div class="tr alt" style="top:363px"><a id="sn11" class="t sn" style="left:10.35px;top:7px;letter-spacing:0.361px;">4423623659</a><span id="sku11" class="t td" style="left:159.38px;top:9px;letter-spacing:-0.25px;">IX01</span><span id="nm11" class="t td" style="left:309.1px;top:9px;">Iphone X</span><span id="dv11" class="t td" style="left:529.9px;top:9px;letter-spacing:-0.187px;">Chiếc</span><span id="tt11" class="t td" style="left:879.72px;top:9px;letter-spacing:-0.107px;">Còn hàng</span></div>
<div class="tr" style="top:396px"><a id="sn12" class="t sn" style="left:10.03px;top:6px;letter-spacing:0.215px;">74612355</a><span id="sku12" class="t td" style="left:159.38px;top:9px;letter-spacing:-0.25px;">IX01</span><span id="nm12" class="t td" style="left:309.1px;top:9px;">Iphone X</span><span id="dv12" class="t td" style="left:529.9px;top:9px;letter-spacing:-0.187px;">Chiếc</span><span id="tt12" class="t td" style="left:879.72px;top:9px;letter-spacing:-0.107px;">Còn hàng</span></div>
<div class="tr alt" style="top:429px"></div>
<div class="colsep" style="left:149px"></div><div class="colsep" style="left:299px"></div><div class="colsep" style="left:519px"></div><div class="colsep" style="left:649px"></div><div class="colsep dk" style="left:869px"></div>
</div>
<div id="vsb"><div class="thumb"></div></div>
<div id="hsb"><div class="thumb"></div></div>
<div id="sum"><div class="ssep" style="left:150px"></div><div class="ssep" style="left:300px"></div><div class="ssep" style="left:520px"></div><div class="ssep" style="left:650px"></div><div class="ssep" style="left:1020px"></div></div>
<div class="pb" style="left:179px"></div><div class="pb" style="left:205px"></div><div class="pb" style="left:368px"></div><div class="pb" style="left:394px"></div><div class="pb dark" style="left:420px"></div>
<div id="p1" class="t ptx" style="left:234.53px;top:757px;letter-spacing:-0.187px;">Trang</div><div class="pin"><span id="pv" class="t pv" style="left:0px;top:1px;">1</span></div><div id="p2" class="t ptx" style="left:329.02px;top:757px;letter-spacing:-0.25px;">trên 1</div><div class="psel"><span id="p50" class="t pv" style="left:5.4px;top:5px;letter-spacing:-0.5px;">50</span><svg width="10.4" height="7.5" viewBox="-2 -2 10.4 7.5" style="left:29.30px;top:8.25px"><path d="M0,0 L3.2,3.5 L6.4,0" fill="none" stroke="#212121" stroke-width="1.6"/></svg></div><div id="pinfo" class="t ptx" style="left:1019.45px;top:757px;letter-spacing:-0.075px;">Hiển thị 1 - 23 trên 23 kết quả</div>
<div id="tab"></div>
<svg width="1212" height="796" viewBox="0 0 1212 796" style="left:0;top:0;pointer-events:none"><path d="M435.75,155.2 h11.5 v10.4 q0,0.8 -0.8,0.8 h-9.9 q-0.8,0 -0.8,-0.8 Z" fill="none" stroke="#6b6b6b" stroke-width="1.3"/><rect x="435.1" y="154.4" width="12.8" height="3.6" rx="0.8" fill="#6b6b6b"/><rect x="437.3" y="153.1" width="1.5" height="2" fill="#6b6b6b"/><rect x="444.20000000000005" y="153.1" width="1.5" height="2" fill="#6b6b6b"/><rect x="441.20000000000005" y="160.9" width="3.8" height="3" fill="#6b6b6b"/><path d="M609.75,155.2 h11.5 v10.4 q0,0.8 -0.8,0.8 h-9.9 q-0.8,0 -0.8,-0.8 Z" fill="none" stroke="#6b6b6b" stroke-width="1.3"/><rect x="609.1" y="154.4" width="12.8" height="3.6" rx="0.8" fill="#6b6b6b"/><rect x="611.3000000000001" y="153.1" width="1.5" height="2" fill="#6b6b6b"/><rect x="618.2" y="153.1" width="1.5" height="2" fill="#6b6b6b"/><rect x="615.2" y="160.9" width="3.8" height="3" fill="#6b6b6b"/><path d="M653.2,156.1 L662.6,156.1 L659.4,160.3 L659.4,164.9 L656.6,163 L656.6,160.3 Z" fill="#1f2270"/><rect x="973.7" y="155.1" width="7.8" height="2" fill="#fff" stroke="#2b2e7a" stroke-width="0.9"/><rect x="970" y="156.9" width="14.9" height="6.9" rx="1.6" fill="#2b2e7a"/><rect x="973.4" y="162.2" width="8.4" height="5.4" fill="#fff" stroke="#2b2e7a" stroke-width="1"/><path d="M974.6,164.1 h6 M974.6,165.9 h6" stroke="#2b2e7a" stroke-width="0.8"/><path d="M1026.2,159.1 L1036.1,159.1 L1031.15,164.2 Z" fill="#2b2e7a"/><path d="M1069,164.8 a3.7,3.7 0 0 1 -0.5,-7.3 a4.9,4.9 0 0 1 9.3,1.1 a3.1,3.1 0 0 1 -0.4,6.2 Z" fill="#2b2e7a"/><path d="M1072.2,157.9 h1.8 v2.6 h1.9 l-2.8,2.9 l-2.8,-2.9 h1.9 Z" fill="#fff"/><path d="M1178.95,154.97 L1179.30,152.15 L1184.60,152.15 L1184.95,154.97 A6.65,6.65 0 0 1 1185.59,155.33 L1188.20,154.23 L1190.85,158.82 L1188.59,160.53 A6.65,6.65 0 0 1 1188.59,161.27 L1190.85,162.98 L1188.20,167.57 L1185.59,166.47 A6.65,6.65 0 0 1 1184.95,166.83 L1184.60,169.65 L1179.30,169.65 L1178.95,166.83 A6.65,6.65 0 0 1 1178.31,166.47 L1175.70,167.57 L1173.05,162.98 L1175.31,161.27 A6.65,6.65 0 0 1 1175.31,160.53 L1173.05,158.82 L1175.70,154.23 L1178.31,155.33 A6.65,6.65 0 0 1 1178.95,154.97 Z M1178.05,160.9 a3.9,3.9 0 1 0 7.8,0 a3.9,3.9 0 1 0 -7.8,0 Z" fill="#2b2e7a" fill-rule="evenodd" stroke="#2b2e7a" stroke-width="0.5" stroke-linejoin="round"/><circle cx="1181.95" cy="160.9" r="1.95" fill="#2b2e7a"/><path d="M1188.7,266.3 L1196.3,266.3 L1192.5,261.9 Z" fill="#a3a3a3"/><path d="M1189.2,678.8 L1196.4,678.8 L1192.8,682.9 Z" fill="#505050"/><path d="M1050.3,695.2 L1050.3,702 L1045.9,698.6 Z" fill="#a3a3a3"/><path d="M1173.9,695.2 L1173.9,702 L1178.4,698.6 Z" fill="#505050"/><path d="M190.9,761.5 l-3.6,3.5 l3.6,3.5" fill="none" stroke="#8c8fb8" stroke-width="1.1"/><path d="M194.5,761.5 l-3.6,3.5 l3.6,3.5" fill="none" stroke="#8c8fb8" stroke-width="1.1"/><path d="M218.4,761.5 l-3.6,3.5 l3.6,3.5" fill="none" stroke="#8c8fb8" stroke-width="1.1"/><path d="M377.6,761.5 l3.6,3.5 l-3.6,3.5" fill="none" stroke="#8c8fb8" stroke-width="1.1"/><path d="M401.6,761.5 l3.6,3.5 l-3.6,3.5" fill="none" stroke="#8c8fb8" stroke-width="1.1"/><path d="M405.2,761.5 l3.6,3.5 l-3.6,3.5" fill="none" stroke="#8c8fb8" stroke-width="1.1"/><g fill="none" stroke="#2b2e7a" stroke-width="1.5"><path d="M432,760.4 A4.6,4.6 0 0 1 435.9,767.4"/><path d="M432,769.6 A4.6,4.6 0 0 1 428.1,762.6"/></g><path d="M432,757.9 L432,762.9 L429.3,760.4 Z" fill="#2b2e7a"/><path d="M432,767.1 L432,772.1 L434.7,769.6 Z" fill="#2b2e7a"/><path d="M1199.7,300.4 L1203.5,304.1 L1199.7,307.8" fill="none" stroke="#fff" stroke-width="1.5"/></svg>
<div id="frame"></div>
</body></html>
